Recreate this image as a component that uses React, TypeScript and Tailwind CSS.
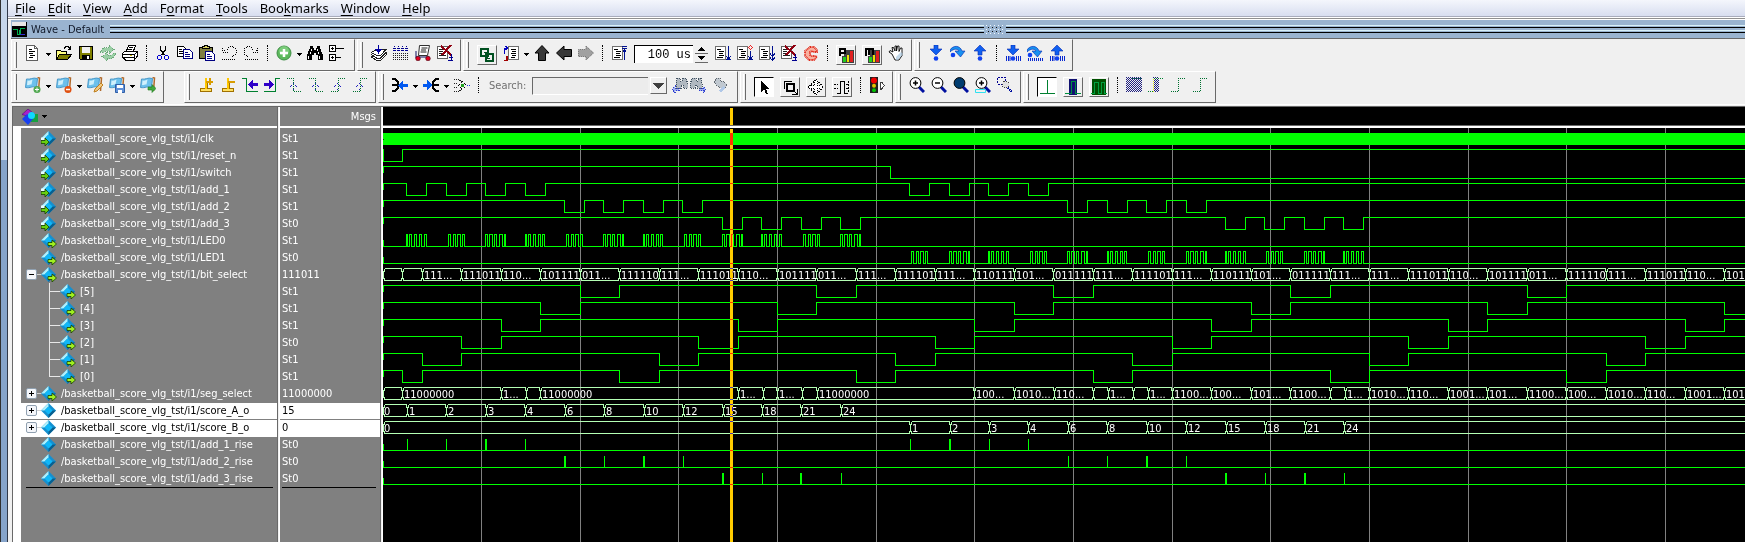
import { Fragment, type ReactNode } from 'react'
import clsx from 'clsx'

const menus = [
  ['', 'F', 'ile'],
  ['', 'E', 'dit'],
  ['', 'V', 'iew'],
  ['', 'A', 'dd'],
  ['F', 'o', 'rmat'],
  ['', 'T', 'ools'],
  ['Boo', 'k', 'marks'],
  ['', 'W', 'indow'],
  ['', 'H', 'elp'],
]

type Kind = 'in' | 'out' | 'net'

interface Signal {
  name: string
  value: string
  kind: Kind
  child?: boolean
  expand?: 'open' | 'closed'
  selected?: boolean
}

const TOP = '/basketball_score_vlg_tst/i1/'

const signals: Signal[] = [
  { name: TOP + 'clk', value: 'St1', kind: 'in' },
  { name: TOP + 'reset_n', value: 'St1', kind: 'in' },
  { name: TOP + 'switch', value: 'St1', kind: 'in' },
  { name: TOP + 'add_1', value: 'St1', kind: 'in' },
  { name: TOP + 'add_2', value: 'St1', kind: 'in' },
  { name: TOP + 'add_3', value: 'St0', kind: 'in' },
  { name: TOP + 'LED0', value: 'St1', kind: 'out' },
  { name: TOP + 'LED1', value: 'St0', kind: 'out' },
  { name: TOP + 'bit_select', value: '111011', kind: 'out', expand: 'open' },
  { name: '[5]', value: 'St1', kind: 'out', child: true },
  { name: '[4]', value: 'St1', kind: 'out', child: true },
  { name: '[3]', value: 'St1', kind: 'out', child: true },
  { name: '[2]', value: 'St0', kind: 'out', child: true },
  { name: '[1]', value: 'St1', kind: 'out', child: true },
  { name: '[0]', value: 'St1', kind: 'out', child: true },
  { name: TOP + 'seg_select', value: '11000000', kind: 'out', expand: 'closed' },
  { name: TOP + 'score_A_o', value: '15', kind: 'net', expand: 'closed', selected: true },
  { name: TOP + 'score_B_o', value: '0', kind: 'net', expand: 'closed', selected: true },
  { name: TOP + 'add_1_rise', value: 'St0', kind: 'net' },
  { name: TOP + 'add_2_rise', value: 'St0', kind: 'net' },
  { name: TOP + 'add_3_rise', value: 'St0', kind: 'net' },
]

/* ---------- waveforms ---------- */

const END = 4000
const STEP = 39.467
const range = (n: number) => Array.from({ length: n }, (_, i) => i)
const at = (start: number, k: number) => Math.floor(start + STEP * k)
const press = (k: number) => at(23.6, k)
const press2 = (k: number) => at(526.75, k)
const score = (k: number) => at(24.3, k)
const score2 = (k: number) => at(527.55, k)
const slot = (k: number) => (k < 0 ? 19 : at(39.3, k))
const top = (row: number) => 4 + row * 17

// pulses: [from, to] pairs where the signal leaves its idle level
function wave(row: number, idle: 0 | 1, pulses: number[][]) {
  const hi = top(row) + 0.5
  const lo = hi + 12
  const a = idle ? hi : lo
  const b = idle ? lo : hi
  let d = `M0 ${a}`
  pulses.forEach(([from, to]) => {
    d += `H${from + 0.5}V${b}H${to + 0.5}V${a}`
  })
  return d + `H${END}`
}

const presses = (first: number) =>
  [press, press2].flatMap((p) => range(4).map((k) => [p(first + k), p(first + k) + 20]))

const bursts: Record<string, number[][]> = {
  A: [[0, 1], [3, 5], [8, 10], [13, 15], [18, 20]],
  B: [[2, 4], [7, 9], [11, 14], [16, 18]],
  C: [[0, 2], [4, 7], [9, 11], [14, 17], [19, 20]],
  D: [[0, 1], [3, 5], [8, 10], [13, 15], [17, 19]],
}

const led = (order: string, p: (k: number) => number) =>
  order.split('').flatMap((c, k) => bursts[c].map(([f, t]) => [p(k) + f, p(k) + t]))

const bit = (n: number) => range(8).map((k) => [slot(n - 1 + 6 * k), slot(n + 6 * k)])

const lines = [
  wave(1, 1, [[0, 19]]),
  wave(2, 1, [[507, END]]),
  wave(3, 1, presses(0)),
  wave(4, 1, presses(4)),
  wave(5, 1, presses(8)),
  wave(6, 0, led('ABCDBCDBCABC', press)),
  wave(7, 0, led('BCABCDBCABCA', press2)),
  ...[5, 4, 3, 2, 1, 0].map((n) => wave(14 - n, 1, bit(n))),
  wave(18, 0, []),
  wave(19, 0, []),
  wave(20, 0, []),
]

const bitLabels =
  '111... 111011 110... 101111 011... 111110 111... 111011 110... 101111 011... 111... 111101 111... 110111 101... 011111 111... 111101 111... 110111 101... 011111 111... 111... 111011 110... 101111 011... 111110 111... 111011 110... 101'.split(' ')

const points = ['1', '2', '3', '4', '6', '8', '10', '12', '15', '18', '21', '24']

const segTail = '1010... 110... 1001... 101... 1100... 100... 1010... 110... 1001... 101'.split(' ')

const buses: { row: number; cells: [number, string][] }[] = [
  {
    row: 8,
    cells: [[0, ''], [19, ''], ...bitLabels.map((t, k): [number, string] => [slot(k), t])],
  },
  {
    row: 15,
    cells: [
      [0, ''], [19, '11000000'], [118, '1...'], [143, ''], [157, '11000000'], [355, '1...'],
      [380, ''], [394, '1...'], [419, ''], [434, '11000000'], [591, '100...'], [631, '1010...'],
      [671, '110...'], [710, ''], [725, '1...'], [750, ''], [765, '1...'], [789, '1100...'],
      [828, '100...'], [868, '101...'], [907, '1100...'], [947, ''], [962, '1...'],
      ...segTail.map((t, k): [number, string] => [slot(24 + k), t]),
    ],
  },
  { row: 16, cells: [[0, '0'], ...points.map((t, k): [number, string] => [score(k), t])] },
  { row: 17, cells: [[0, '0'], ...points.map((t, k): [number, string] => [score2(k), t])] },
]

function busPath(row: number, xs: number[]) {
  const hi = top(row) + 0.5
  const lo = hi + 12
  let d = ''
  xs.forEach((x, i) => {
    const from = x + 1.5
    const to = (i + 1 < xs.length ? xs[i + 1] : END) - 0.5
    d += `M${from} ${hi}H${to}M${from} ${lo}H${to}`
    if (i > 0) d += `M${x - 0.5} ${hi}v3M${x - 0.5} ${lo}v-3M${x + 0.5} ${hi + 2}V${lo - 2}`
    else d += `M0.5 ${hi + 2}V${lo - 2}`
    d += `M${from} ${hi}v3M${from} ${lo}v-3`
  })
  return d
}

const wide1 = [2, 4, 6, 8, 10]
const wide2 = [1, 6, 8, 10]

function Waves() {
  return (
    <svg className="block min-h-[370px] w-full flex-1 bg-black" shapeRendering="crispEdges" aria-label="Waveforms">
      {range(30).map((k) => {
        const x = Math.floor(98.67 * (k + 1) - 0.3) + 0.5
        return <line key={k} x1={x} x2={x} y1="0" y2="100%" stroke="#808080" />
      })}
      <rect x="0" y="5" width={END} height="12" fill="#00ff00" />
      <rect x="0" y="11" width="1" height="1" fill="#004000" />
      {lines.map((d) => (
        <path key={d} d={d} fill="none" stroke="#00ff00" />
      ))}
      {[2, 3, 4, 5, 9, 10, 11, 12, 13, 14].map((row) => (
        <rect key={row} x="0" y={top(row)} width="1" height="7" fill="#00ff00" />
      ))}
      {[1, 6, 7, 18, 19, 20].map((row) => (
        <rect key={row} x="0" y={top(row) + 6} width="1" height="6" fill="#00ff00" />
      ))}
      {range(12).map((k) => {
        const y = top(18 + Math.floor(k / 4)) + 1
        const w1 = wide1.includes(k) ? 1 : 0
        const w2 = wide2.includes(k) ? 1 : 0
        return (
          <Fragment key={k}>
            <rect x={score(k) - w1} y={y} width={1 + w1} height="12" fill="#00ff00" />
            <rect x={score2(k) - w2} y={y} width={1 + w2} height="12" fill="#00ff00" />
          </Fragment>
        )
      })}
      {buses.map(({ row, cells }) => (
        <g key={row}>
          <path d={busPath(row, cells.map((c) => c[0]))} fill="none" stroke="#b4ffb4" />
          {cells.map(([x, label]) => (
            <text key={x} x={x + (label === '0' ? 1 : 2)} y={top(row) + 11} fill="#fff" className="text-[11px]">
              {label}
            </text>
          ))}
        </g>
      ))}
      <rect x="347" y="1" width="3" height="100%" fill="#ffcc00" className="mix-blend-difference" />
    </svg>
  )
}

/* ---------- icons ---------- */

function Svg({ children, w = 16, h = 16, smooth }: { children: ReactNode; w?: number; h?: number; smooth?: boolean }) {
  return (
    <svg width={w} height={h} viewBox={`0 0 ${w} ${h}`} fill="none" shapeRendering={smooth ? 'auto' : 'crispEdges'} className="shrink-0">
      {children}
    </svg>
  )
}

const Sheet = () => (
  <>
    <path d="M1.5 1.5h10v13h-10z" fill="#fff" stroke="#707070" />
    <path d="M3 4.5h4M5 6.5h5M5 8.5h4M5 10.5h5M3 12.5h6" stroke="#000" />
  </>
)

const NewDoc = () => (
  <Svg>
    <path d="M1.5 .5h8l3 3v12h-11z" fill="#fff" stroke="#606060" />
    <path d="M9.5 .5v3h3" stroke="#606060" />
    <path d="M4 4.5h3M4 6.5h6M4 8.5h4M5 10.5h5M4 12.5h4" stroke="#000" />
  </Svg>
)

const Open = () => (
  <Svg>
    <path d="M.5 14.5v-9h4l1 1h5v3" fill="#ffff80" stroke="#000" />
    <path d="M.5 14.5l3-5h12l-4 5z" fill="#808000" stroke="#000" />
    <path d="M8 3.5l2-2h2l2 2M14.5 1v3h-3" stroke="#000" />
  </Svg>
)

const Save = () => (
  <Svg>
    <path d="M1.5 1.5h13v13h-12l-1-1z" fill="#808000" stroke="#000" />
    <path d="M4 2h8v6H4z" fill="#f0f0f0" />
    <path d="M4 10h8v5H4z" fill="#000" />
    <path d="M9 11h2v3H9z" fill="#fff" />
  </Svg>
)

const Reload = () => (
  <Svg>
    <path d="M0 7l4-4.500h5V0l5 4.500-5 4V6H5L3 8zM16 9l-4 4.500H7V16l-5-4.500 5-4V10h4l2-2z" fill="#9ccfa6" stroke="#6aa878" strokeDasharray="1 1" />
  </Svg>
)

const Print = () => (
  <Svg>
    <path d="M4.500 6l2-5.500h7l-2 5.500" fill="#fff" stroke="#000" />
    <path d="M7 2.500h4M6 4.500h4" stroke="#000" />
    <path d="M.5 8.500l3-2.500h11l1 1v4l-3 4h-9l-3-3z" fill="#fff" stroke="#000" />
    <path d="M1 9.500h11l3-2M2 12.500h10M12.500 9v5" stroke="#000" />
    <path d="M8 10.500h2" stroke="#c8b400" />
  </Svg>
)

const Cut = () => (
  <Svg>
    <path d="M5.500 1v4l4 5M10.500 1v4l-4 5" stroke="#000" strokeWidth="1.300" />
    <circle cx="4.500" cy="12.500" r="2" stroke="#0000d0" />
    <circle cx="11.500" cy="12.500" r="2" stroke="#0000d0" />
  </Svg>
)

const Copy = () => (
  <Svg>
    <path d="M.5 1.500h6l2 2v8h-8z" fill="#fff" stroke="#000" />
    <path d="M2 4.500h3M2 6.500h4M2 8.500h4" stroke="#000" />
    <path d="M6.500 4.500h6l3 3v6h-9z" fill="#fff" stroke="#000080" />
    <path d="M8 7.500h3M8 9.500h5M8 11.500h5" stroke="#000080" />
  </Svg>
)

const Paste = () => (
  <Svg>
    <path d="M.5 2.500h13v11H.5z" fill="#808040" stroke="#000" />
    <path d="M3.500 3.500v-2h2v-1h3v1h2v2z" fill="#d8d060" stroke="#000" />
    <path d="M6.500 6.500h6l3 3v6h-9z" fill="#fff" stroke="#000080" />
    <path d="M8 9.500h3M8 11.500h5M8 13.500h5" stroke="#000080" />
  </Svg>
)

const Undo = ({ flip }: { flip?: boolean }) => (
  <Svg>
    <g transform={flip ? 'matrix(-1 0 0 1 16 0)' : undefined} stroke="#000" strokeDasharray="1 1">
      <path d="M1.500 3v4h5M2.500 5.500h2" />
      <path d="M6 4.500l3-3h3l3 3v4l-3 3h-1" />
      <path d="M1 14.500h14" />
    </g>
  </Svg>
)

const Plus = () => (
  <Svg smooth>
    <circle cx="8" cy="8" r="7" fill="#5cb85c" stroke="#3f8f45" />
    <circle cx="8" cy="6" r="5" fill="#8ed88e" opacity=".6" />
    <path d="M8 4v8M4 8h8" stroke="#fff" strokeWidth="2.500" />
  </Svg>
)

const Binoculars = () => (
  <Svg>
    <path d="M3 1h3v2h1v2h2V3h1V1h3v2l3 7v5h-5v-5H9V8H7v2H5v5H0v-5l3-7z" fill="#000" />
    <path d="M4.500 4v2M3.500 7v2M1.500 11v3M10.500 4v2M11.500 7v2M12.500 11v3" stroke="#fff" />
  </Svg>
)

const Tree = () => (
  <Svg>
    <path d="M.5 .5h6v6h-6zM.5 9.500h6v6h-6z" fill="#fff" stroke="#000" />
    <path d="M2 3.500h3M3.500 2v3M2 12.500h3M3.500 11v3M7 3.500h8M7 12.500h5" stroke="#000" />
  </Svg>
)

const Compile = ({ all }: { all?: boolean }) => (
  <Svg>
    {all ? (
      <>
        {[1, 3, 5, 7].map((y) => (
          <path key={y} d={`M0 ${y + 7.5}h16`} stroke="#202020" strokeDasharray="1 1" />
        ))}
        <path d="M1.500 1v5M5.500 1v5M9.500 1v5M13.500 1v5M0 5.500h15M0 3.500h15" stroke="#000090" strokeDasharray="1 1" />
      </>
    ) : (
      <>
        <path d="M.5 12l5 3.500h4l6-6v-2l-9 1z" fill="#fff" stroke="#202020" />
        <path d="M.5 9.500l5 3.500h4l6-6" fill="#fff" stroke="#202020" />
        <path d="M.5 7.500l6-3.500h9l-6 6.500h-4z" fill="#fff" stroke="#202020" />
        <path d="M7.500 0v6M5 4.500l2.500 3 2.500-3z" stroke="#0000a0" fill="#0000a0" strokeWidth="1.500" />
      </>
    )}
  </Svg>
)

const Simulate = () => (
  <Svg smooth>
    <path d="M4.500 .5h10l-2 10h-9z" fill="#fff" stroke="#303030" />
    <path d="M6.500 3h6M6 5h5M5.500 7h6" stroke="#202020" />
    <path d="M1 6v7M1 12h13" stroke="#101060" />
    <circle cx="3" cy="13.500" r="2.300" fill="#e00020" stroke="#400010" strokeWidth=".6" />
    <circle cx="13" cy="13.500" r="2.300" fill="#e00020" stroke="#400010" strokeWidth=".6" />
  </Svg>
)

const BreakSheet = () => (
  <Svg>
    <path d="M.5 1.500h10v12H.5z" fill="#fff" stroke="#606060" />
    <path d="M2 4.500h7M2 6.500h4M2 8.500h6M2 10.500h7" stroke="#202020" />
    <path d="M4 1l10 9M14 0L5 10" stroke="#900010" strokeWidth="2" />
    <path d="M14.500 9v7M12 12.500h4M11 15.500h5" stroke="#000090" />
  </Svg>
)

const Flag = ({ children }: { children: ReactNode }) => (
  <Svg smooth>
    <path d="M12.500 .5l2 .5-1 13" stroke="#b06a2c" strokeWidth="1.500" />
    <path d="M1.500 2c4 1 6-2 11-.5l-1 9c-4-2-6 1-11 0z" fill="#6cc0ec" stroke="#4a98c8" />
    <path d="M2.500 3.500c2 .5 4-.5 5-1l-1 5c-2 0-3 1-4.500.5z" fill="#d0f0fc" />
    {children}
  </Svg>
)

const Wire = ({ minus }: { minus?: boolean }) => (
  <Svg>
    <path d="M2 11.500h11v3H2z" fill="#ffe060" stroke="#a07000" />
    <path d="M7 1h2v11H7z" fill="#ffc800" />
    <path d="M9.500 6v5" stroke="#a07000" />
    <path d={minus ? 'M8 4.500h7' : 'M8 4.500h7M11.500 1v7'} stroke="#d89c00" strokeWidth="2" />
  </Svg>
)

const Edge = ({ left }: { left?: boolean }) => (
  <Svg>
    {left ? (
      <path d="M0 1.500h4.500v13H16" stroke="#008030" />
    ) : (
      <path d="M0 14.500h11.500v-13H16" stroke="#008030" />
    )}
    {left ? (
      <path d="M6 7.500l5-4.500v3h5v3h-5v3z" fill="#3000c8" />
    ) : (
      <path d="M10 7.500L5 3v3H0v3h5v3z" fill="#3000c8" />
    )}
  </Svg>
)

const DimEdge = ({ fall, blue = true }: { fall?: boolean; blue?: boolean }) => (
  <Svg>
    <path d={fall ? 'M1 1.500h6.500v13H15' : 'M1 14.500h7.500v-13H15'} stroke="#007030" strokeDasharray="1 1" />
    {blue && <path d="M7.500 6.500l3 3-3 3-3-3z" stroke="#2020c0" strokeDasharray="1 1" />}
  </Svg>
)

const Merge = ({ flip, dim }: { flip?: boolean; dim?: boolean }) => (
  <Svg>
    {dim ? (
      <>
        <path d="M0 2.500h5l3 3M0 14.500h5l3-3M0 6.500h4M0 10.500h4" stroke="#202020" strokeDasharray="1 1" />
        <path d="M8.500 4.500l4 4-4 4-4-4z" stroke="#000" strokeDasharray="1 1" />
        <path d="M7 8.500h3" stroke="#20a020" strokeWidth="3" />
        <path d="M13 8.500h3" stroke="#2030e0" strokeDasharray="1 1" />
      </>
    ) : flip ? (
      <>
        <path d="M16 2h-3l-3 3v6l3 3h3M10 8h6" stroke="#000" strokeWidth="2" />
        <path d="M9 8L4 3v4H0v3h4v3z" fill="#0058f0" />
      </>
    ) : (
      <>
        <path d="M0 2h3l3 3v6l-3 3H0M0 8h6" stroke="#000" strokeWidth="2" />
        <path d="M6 8l5-5v4h5v3h-5v4z" fill="#0058f0" />
      </>
    )}
  </Svg>
)

const Link = () => (
  <Svg>
    <path d="M2 2h7v7H2zM7 7h7v7H7z" stroke="#005020" strokeWidth="2" />
    <path d="M5 5h3v3M11 11H8V8" stroke="#005020" strokeWidth="1" />
  </Svg>
)

const Restart = () => (
  <Svg>
    <path d="M5.500 1.500h10v13h-10z" fill="#fff" stroke="#707070" />
    <path d="M8 4.500h5M9 6.500h4M8 8.500h5M9 10.500h4M8 12.500h4" stroke="#000" />
    <path d="M1.500 9V3h2M2.500 1l2 2-2 2" stroke="#0000c0" />
    <path d="M.5 15.500h3v-5" stroke="#a00000" strokeWidth="2" />
  </Svg>
)

const Arrow = ({ rotate = 0, dim }: { rotate?: number; dim?: boolean }) => (
  <Svg smooth>
    <path
      transform={`rotate(${rotate} 8 8)`}
      d="M8 .5l7 7.500h-3.500V15.500h-7V8H1z"
      fill={dim ? '#a0a0a0' : '#383838'}
      stroke={dim ? '#606060' : '#000'}
      strokeDasharray={dim ? '1 1' : undefined}
    />
  </Svg>
)

const Run = ({ kind }: { kind: 'back' | 'run' | 'cont' | 'all' }) => (
  <Svg>
    <g transform={kind === 'back' ? undefined : 'translate(-1 0)'}>
      <Sheet />
    </g>
    {kind === 'back' && <path d="M13.500 3v12M11 3.500h5M11 1.500h5M12 6.500l1.500-2 1.500 2" stroke="#001090" />}
    {kind === 'run' && <path d="M13.500 1v13M11.500 11.500l2 3 2-3M11 14.500h5" stroke="#001090" />}
    {kind === 'cont' && (
      <>
        <path d="M13.500 6v8M11.500 11.500l2 3 2-3M11 14.500h5" stroke="#001090" />
        <path d="M13.500 .5l2 2-2 2-2-2z" stroke="#f02020" />
      </>
    )}
    {kind === 'all' && <path d="M13.500 1v14M11 8.500l2.500 3 2.500-3M11 12.500l2.500 3 2.500-3" stroke="#001090" />}
  </Svg>
)

const Stop = () => (
  <Svg smooth>
    <path d="M7 2h4l3 3v2h-4L9 6 7 7v3l2 1h4l1 1-3 3H6l-4-4V6z" fill="#f8b0a0" stroke="#e02818" strokeDasharray="1 .6" strokeWidth="1.800" />
  </Svg>
)

const Profile = ({ memory }: { memory?: boolean }) => (
  <Svg>
    <path d="M6 3h10v13H4V9h2z" fill="#404040" />
    <path d="M5 10h3v5H5z" fill="#20d020" />
    <path d="M9 8h2v7H9z" fill="#f0e000" />
    <path d="M12 4h3v11h-3z" fill="#e02020" />
    <path d={memory ? 'M2 9V2h3v6M5 2h4v6' : 'M2 9V2h5v4H2'} stroke="#000" strokeWidth="2" />
  </Svg>
)

const Hand = () => (
  <Svg smooth>
    <path d="M4 9L1 7l1-1.500L5 7 4 2.500h1.500L7 6V1h1.500v5l1-5H11v5.500L12.500 3H14v7.500l-3 4.500H7z" fill="#fff" stroke="#000" strokeWidth=".9" />
    <path d="M8 12l5-5 2 2-5 6H8z" fill="#a8c8e0" opacity=".7" />
  </Svg>
)

const StepArrow = ({ kind, bars }: { kind: 'in' | 'over' | 'out'; bars?: boolean }) => (
  <Svg smooth>
    {kind === 'in' && <path d="M6 0h4v4h4L8 10 2 4h4z" fill="#1060f0" stroke="#0828b0" strokeWidth=".6" />}
    {kind === 'out' && <path d="M6 10h4V6h4L8 0 2 6h4z" fill="#1060f0" stroke="#0828b0" strokeWidth=".6" />}
    {kind === 'over' && <path d="M0 5c3-5 10-5 12 1h3l-4.500 6L5 6h4C8 4 4 3 0 7z" fill="#1890f0" stroke="#0828b0" strokeWidth=".6" />}
    <circle cx={kind === 'over' ? 3 : 8} cy={kind === 'over' ? 10 : 13.5} r="2.300" fill="#1040f0" />
    {bars && <path d={kind === 'over' ? 'M1.500 13v3M3.500 13v3M5.500 13v3M7.500 13v3M9.500 13v3M11.500 13v3M13.500 13v3M15.500 13v3' : 'M1.500 11v5M3.500 11v5M5 11v5M11.500 11v5M13.500 11v5M15.500 11v5'} stroke="#0828d0" />}
  </Svg>
)

const FindDim = ({ flip }: { flip?: boolean }) => (
  <Svg>
    <g transform={flip ? 'matrix(-1 0 0 1 16 0)' : undefined}>
      <path d="M5 1h3v3h2V1h4l2 7v3h-5V8H9v3H4V7z" fill="#b0b8c0" stroke="#405060" strokeDasharray="1 1" />
      <path d="M0 12.500l3-3v2h4v2H3v2z" fill="#a0b0f0" stroke="#3040d0" strokeDasharray="1 1" />
    </g>
  </Svg>
)

const FindHand = () => (
  <Svg>
    <path d="M2 5l3-4h3v3h3l4 4-2 3H9L5 9z" fill="#c0c8d0" stroke="#606870" strokeDasharray="1 1" />
    <path d="M6 14l5-5 2 2-4 4z" fill="#b0c8e8" />
  </Svg>
)

const Pointer = () => (
  <Svg>
    <path d="M5 2v11l3-3 2 5h2l-2-5h4z" fill="#000" />
  </Svg>
)

const ZoomBox = () => (
  <Svg>
    <path d="M2.500 10V2.500H10" stroke="#000" />
    <path d="M5 5h7v7H5z" stroke="#000" strokeWidth="2" />
    <path d="M10 15.500h5.500V10M12 12l3 3" stroke="#000" />
  </Svg>
)

const Pan = () => (
  <Svg>
    <path d="M8 .5l3 3H9.500v3h3V5l3 3-3 3V9.500h-3v3H11l-3 3-3-3h1.500v-3h-3V11l-3-3 3-3v1.500h3v-3H5z" fill="#fff" stroke="#000" strokeDasharray="1 1" />
  </Svg>
)

const EditWave = () => (
  <Svg>
    <path d="M6.500 14V2.500h4V14M3 14.500h4M10 14.500h4" stroke="#000" />
    <path d="M0 5.500h4M0 9.500h4M12 5.500h2M12 9.500h2M14.500 2v12" stroke="#000" strokeDasharray="2 1" />
  </Svg>
)

const Traffic = () => (
  <Svg>
    <path d="M1 0h8v16H1z" fill="#202020" />
    <g shapeRendering="auto">
      <circle cx="5" cy="3.500" r="3" fill="#f00000" />
      <circle cx="5" cy="8.800" r="2" fill="#e0c000" />
      <circle cx="5" cy="13.300" r="2" fill="#00c000" />
    </g>
    <path d="M11.500 5v7h1l3-3.500-3-3.500z" fill="#fff" stroke="#404040" />
  </Svg>
)

const Lens = ({ mode }: { mode: 'in' | 'out' | 'full' | 'cursor' }) => (
  <Svg smooth>
    <path d="M10 10l5 5" stroke="#0010a0" strokeWidth="3" />
    <circle cx="6.500" cy="6" r="5.400" fill={mode === 'full' ? '#003c70' : '#fff'} stroke="#000" />
    {mode !== 'full' && <path d={mode === 'out' ? 'M4 6h5' : 'M4 6h5M6.500 3.500v5'} stroke="#000" strokeWidth="1.500" />}
    {mode === 'cursor' && <path d="M.5 12.500h10v3H.5z" stroke="#30e0f0" />}
  </Svg>
)

const LensArea = () => (
  <Svg>
    <path d="M.5 .5h8v3M.5 1v6h4" stroke="#000090" strokeDasharray="2 1" />
    <path d="M7 4l4 1 2 4-3 2-4-1-1-4z" fill="#e0e0e0" stroke="#404040" strokeDasharray="1 1" />
    <path d="M11 11l4 4" stroke="#0010a0" strokeDasharray="1 1" strokeWidth="2" />
  </Svg>
)

const WaveMode = ({ kind }: { kind: 'line' | 'blue' | 'green' }) => (
  <Svg>
    {kind === 'blue' && <path d="M4 0h8v16H4z" fill="#101070" />}
    {kind === 'green' && <path d="M1 0h14v16H1z" fill="#005000" />}
    {kind === 'line' && <path d="M8.500 1v14M1 14.500h15" stroke="#008030" />}
    {kind === 'blue' && <path d="M0 14.500h6V2.500h4v12h6" stroke="#009040" />}
    {kind === 'green' && <path d="M0 14.500h3v-11h4v11h3v-11h3v11h3" stroke="#00a040" />}
  </Svg>
)

const Hatch = ({ narrow }: { narrow?: boolean }) => (
  <Svg>
    {range(15).map((y) => (
      <path key={y} d={narrow ? `M${5 + (y % 2)} ${y + 0.5}h5` : `M${y % 2} ${y + 0.5}h16`} stroke="#202080" strokeDasharray="1 1" />
    ))}
    <path d={narrow ? 'M0 14.500h5M6 1.500h9' : 'M6 1.500h9'} stroke="#008030" strokeDasharray="1 1" />
    {narrow && <path d="M5.500 2v13" stroke="#e0e020" strokeDasharray="1 1" />}
  </Svg>
)

const Diamond = ({ kind }: { kind: Kind }) => (
  <Svg w={16} h={15} smooth>
    <path d="M7.500 0L15 7.500 7.500 15 0 7.500z" fill="#1490d0" />
    <path d="M7.500 0L0 7.500h3.500l4-4z" fill="#b0f0fc" />
    <path d="M15 7.500L7.500 15v-3.500l4-4z" fill="#086090" />
    <path d="M7.500 3.500l4 4-4 4-4-4z" fill="#10b8f8" />
    {kind === 'in' && (
      <>
        <path d="M0 6.500h4v2.500H0z" fill="#e8ffff" />
        <path d="M0 9.500h4V7l4 4-4 4v-2.500H0z" fill="#68d010" stroke="#184000" strokeWidth=".8" />
      </>
    )}
    {kind === 'out' && <path d="M7 9.500h4V7l4.500 4-4.500 4v-2.500H7z" fill="#a0f020" stroke="#184000" strokeWidth=".8" />}
  </Svg>
)

/* ---------- toolbar pieces ---------- */

function Tool({ label, children, narrow }: { label: string; children: ReactNode; narrow?: boolean }) {
  return (
    <button type="button" aria-label={label} className={clsx('flex h-4 justify-center', narrow ? 'w-[18px]' : 'w-[22px]')}>
      {children}
    </button>
  )
}

function Raised({ label, children, pressed }: { label: string; children: ReactNode; pressed?: boolean }) {
  return (
    <button
      type="button"
      aria-label={label}
      aria-pressed={pressed}
      className={clsx(
        'mx-[3px] flex size-5 items-center justify-center border',
        pressed ? 'border-t-black border-l-black border-r-white border-b-white bg-white' : 'border-t-white border-l-white border-r-[#696969] border-b-[#696969]',
      )}
    >
      {children}
    </button>
  )
}

const Caret = () => (
  <button type="button" aria-label="More" className="flex h-4 w-[9px] items-center justify-center pt-0.5">
    <svg width="5" height="3" shapeRendering="crispEdges">
      <path d="M0 0h5L2.500 3z" fill="#000" />
    </svg>
  </button>
)

const Sep = () => (
  <div className="flex w-[11px] justify-center">
    <div className="h-4 border-l border-dotted border-black" />
  </div>
)

function Box({ children, roomy, gapAfter }: { children: ReactNode; roomy?: boolean; gapAfter?: boolean }) {
  return (
    <div
      className={clsx(
        'relative flex h-8 shrink-0 items-start border border-t-white border-l-white border-r-[#696969] border-b-[#696969] pt-[5px] pl-2.5',
        roomy ? 'pr-1.5' : 'pr-1',
        gapAfter && 'mr-[18px]',
      )}
    >
      <div className="absolute top-0.5 left-[2px] h-[26px] w-[3px] border-r border-l border-r-[#696969] border-l-white" />
      {children}
    </div>
  )
}

/* ---------- signal list ---------- */

const Divider = () => <td className="w-[3px] border-r border-l border-r-white border-l-[#696969] bg-[#f0f0f0] p-0" />

function SignalName({ s, last }: { s: Signal; last: boolean }) {
  return (
    <div className="flex h-[15px] items-center">
      {s.child ? (
        <svg width="39" height="17" shapeRendering="crispEdges" className="shrink-0">
          <path d={last ? 'M28.500 0V8.500H39' : 'M28.500 0V17M28.500 8.500H39'} fill="none" stroke="#e8e8e8" />
        </svg>
      ) : s.expand ? (
        <span className="flex w-5 items-center pl-[5px]">
          <button type="button" aria-label={s.expand === 'open' ? 'Collapse' : 'Expand'} className="size-[11px] shrink-0 rounded-xs border border-[#90a0b0] bg-[#f4f6fa]">
            <svg width="9" height="9" shapeRendering="crispEdges">
              <path d={s.expand === 'open' ? 'M2 4.500h5' : 'M2 4.500h5M4.500 2v5'} stroke="#000" />
            </svg>
          </button>
          <span className="h-px flex-1 bg-[#d0d0d0]" />
        </span>
      ) : (
        <span className="w-5" />
      )}
      <Diamond kind={s.kind} />
      <span className="pl-1">{s.name}</span>
    </div>
  )
}

function SignalTable() {
  return (
    <div className="flex w-[371px] shrink-0 flex-col border-l border-[#696969]">
      <table className="w-full table-fixed border-separate border-spacing-0 bg-[#808080] text-left text-white">
        <thead>
          <tr className="h-[21px]">
            <th className="h-[21px] w-[264px] border-b-2 border-white p-0 pl-[9px]">
              <button type="button" aria-label="Signal filter" className="flex items-center gap-1">
                <Svg smooth>
                  <path d="M6 0l7 5.500-6 2-7-2z" fill="#a820c8" stroke="#500070" strokeWidth=".6" />
                  <path d="M9 5h7v8H9z" fill="#18a040" />
                  <path d="M0 10l5-5 6 5-5 6z" fill="#1840f0" />
                  <circle cx="9.500" cy="6.500" r="3.500" fill="#10d8ff" />
                </Svg>
                <svg width="5" height="3" shapeRendering="crispEdges">
                  <path d="M0 0h5L2.500 3z" fill="#000" />
                </svg>
              </button>
            </th>
            <Divider />
            <th className="w-[100px] border-b-2 border-white p-0 pr-1 text-right font-normal">Msgs</th>
            <Divider />
          </tr>
        </thead>
        <tbody>
          <tr className="h-[3px]">
            <td className="border-l-8 border-white p-0" />
            <Divider />
            <td className="p-0" />
            <Divider />
          </tr>
          {signals.map((s, i) => {
            const split = s.selected && signals[i + 1].selected
            return (
              <tr key={s.name} className="h-[17px]">
                <td className={clsx('h-[17px] border-l-8 border-white p-0', s.selected && 'bg-white text-black')}>
                  <div className={clsx('h-[17px]', split && 'shadow-[inset_0_-1px_0_#808080]')}>
                    <SignalName s={s} last={!signals[i + 1]?.child} />
                  </div>
                </td>
                <Divider />
                <td className={clsx('h-[17px] p-0', s.selected && 'bg-white text-black')}>
                  <div className={clsx('h-[17px] pl-0.5 leading-[15px]', split && 'shadow-[inset_0_-1px_0_#808080]')}>{s.value}</div>
                </td>
                <Divider />
              </tr>
            )
          })}
        </tbody>
      </table>
      <div className="-mt-px flex flex-1 bg-[#808080]">
        <div className="w-[264px] border-l-8 border-white">
          <div className="mr-1 ml-[5px] h-px bg-black" />
        </div>
        <div className="w-[3px] border-r border-l border-r-white border-l-[#696969] bg-[#f0f0f0]" />
        <div className="w-[100px]">
          <div className="mr-1 ml-0.5 h-px bg-black" />
        </div>
        <div className="w-[3px] border-r border-l border-r-white border-l-[#696969] bg-[#f0f0f0]" />
      </div>
    </div>
  )
}

const TitleLines = ({ className }: { className: string }) => (
  <div className={clsx('flex flex-col justify-center gap-0.5', className)}>
    <div className="h-[3px] border-t border-b border-t-[#d8f0f8] border-b-black" />
    <div className="h-[3px] border-t border-b border-t-[#d8f0f8] border-b-black" />
  </div>
)

export default function App() {
  return (
    <div className="flex min-h-screen overflow-hidden bg-[#f0f0f0] font-['DejaVu_Sans_Condensed','Noto_Sans',sans-serif] text-[11px] leading-[17px] text-black">
      <div className="flex w-2 shrink-0 flex-col border-r border-l border-r-[#303848] border-l-[#303030]">
        <div className="h-40 bg-[#c6d6ea]" />
        <div className="flex-1 bg-[#86a4ca]" />
      </div>
      <div className="flex min-w-0 flex-1 flex-col">
        <nav className="flex h-[17px] items-center gap-3 border-b border-[#a8acbc] bg-linear-to-b from-[#f4f6fc] to-[#d8def0] pl-[7px] font-['Noto_Sans',sans-serif] text-[13px] leading-4">
          {menus.map(([a, key, b]) => (
            <button key={a + key + b} type="button">
              {a}
              <span className="underline underline-offset-2">{key}</span>
              {b}
            </button>
          ))}
        </nav>
        <div className="h-[3px] border-t border-b border-t-white border-b-white bg-[#909090]" />

        <div className="ml-[3px] flex h-[19px] items-stretch border-b border-[#696969] bg-[#9ab4d0]">
          <div className="flex items-center gap-1 pr-1.5 pl-px text-[#101828]">
            <Svg w={15} h={15}>
              <path d="M0 0h15v15H0z" fill="#000" />
              <path d="M0 0h14v4H0z" fill="#e8e8e8" />
              <path d="M1 7.500h4v5h2v-5M8 12.500V6.500h5" stroke="#00b050" />
              <path d="M8 12.500h5" stroke="#3030d0" />
            </Svg>
            <span>Wave - Default</span>
          </div>
          <TitleLines className="flex-[874]" />
          <svg width="22" height="18" shapeRendering="crispEdges">
            {range(5).map((y) => (
              <path key={y} d={`M${y % 2 ? 4 : 2} ${y * 2 + 5.5}H20`} stroke={y % 2 ? '#101010' : '#f0f8ff'} strokeDasharray="1 3" />
            ))}
          </svg>
          <TitleLines className="flex-[739]" />
        </div>

        <div className="ml-[3px] flex gap-0.5">
          <Box roomy>
            <Tool label="New"><NewDoc /></Tool>
            <Caret />
            <Tool label="Open"><Open /></Tool>
            <Tool label="Save"><Save /></Tool>
            <Tool label="Reload"><Reload /></Tool>
            <Tool label="Print"><Print /></Tool>
            <Sep />
            <Tool label="Cut"><Cut /></Tool>
            <Tool label="Copy"><Copy /></Tool>
            <Tool label="Paste"><Paste /></Tool>
            <Tool label="Undo"><Undo /></Tool>
            <Tool label="Redo"><Undo flip /></Tool>
            <Sep />
            <Tool label="Add"><Plus /></Tool>
            <Caret />
            <Tool label="Find"><Binoculars /></Tool>
            <Tool label="Collapse all"><Tree /></Tool>
          </Box>
          <Box>
            <Tool label="Compile"><Compile /></Tool>
            <Tool label="Compile all"><Compile all /></Tool>
            <Tool label="Simulate"><Simulate /></Tool>
            <Tool label="Break"><BreakSheet /></Tool>
          </Box>
          <Box>
            <Raised label="Link"><Link /></Raised>
            <Tool label="Restart"><Restart /></Tool>
            <Caret />
            <Tool label="Environment up"><Arrow /></Tool>
            <Tool label="Back"><Arrow rotate={-90} /></Tool>
            <Tool label="Forward"><Arrow rotate={90} dim /></Tool>
            <Sep />
            <Tool label="Restart run"><Run kind="back" /></Tool>
            <input
              aria-label="Run length"
              defaultValue="100 us"
              className="ml-1 h-[18px] w-[59px] border-t border-l border-black bg-white pr-0.5 text-right font-['Liberation_Mono',monospace] text-xs"
            />
            <div className="mr-1 ml-0.5 flex w-[13px] flex-col">
              <button type="button" aria-label="Longer" className="flex h-[9px] items-center justify-center border-b border-[#696969]">
                <svg width="7" height="4" shapeRendering="crispEdges"><path d="M0 4h7L3.500 0z" /></svg>
              </button>
              <button type="button" aria-label="Shorter" className="flex h-[9px] items-center justify-center border-b border-[#696969]">
                <svg width="7" height="4" shapeRendering="crispEdges"><path d="M0 0h7L3.500 4z" /></svg>
              </button>
            </div>
            <Tool label="Run"><Run kind="run" /></Tool>
            <Tool label="Continue run"><Run kind="cont" /></Tool>
            <Tool label="Run all"><Run kind="all" /></Tool>
            <Tool label="Break run"><BreakSheet /></Tool>
            <Tool label="Stop"><Stop /></Tool>
            <Sep />
            <Raised label="Performance profiling"><Profile /></Raised>
            <Raised label="Memory profiling"><Profile memory /></Raised>
            <Tool label="Edit breakpoints"><Hand /></Tool>
          </Box>
          <Box>
            <Tool label="Step into"><StepArrow kind="in" /></Tool>
            <Tool label="Step over"><StepArrow kind="over" /></Tool>
            <Tool label="Step out"><StepArrow kind="out" /></Tool>
            <Sep />
            <Tool label="Step into current"><StepArrow kind="in" bars /></Tool>
            <Tool label="Step over current"><StepArrow kind="over" bars /></Tool>
            <Tool label="Step out current"><StepArrow kind="out" bars /></Tool>
          </Box>
        </div>

        <div className="ml-[3px] flex gap-0.5">
          <Box gapAfter>
            <Tool label="Add bookmark"><Flag><circle cx="12" cy="12.500" r="3.500" fill="#50a850" /><path d="M12 10.500v4M10 12.500h4" stroke="#fff" /></Flag></Tool>
            <Caret />
            <Tool label="Delete bookmark"><Flag><circle cx="12" cy="12.500" r="3.500" fill="#e05010" /><path d="M10 12.500h4" stroke="#fff" strokeWidth="1.500" /></Flag></Tool>
            <Caret />
            <Tool label="Edit bookmark"><Flag><path d="M7 15l1-3 6-6 2 2-6 6z" fill="#f0c880" stroke="#c08020" /></Flag></Tool>
            <Tool label="Save bookmarks"><Flag><path d="M6.500 7.500h9v8h-9z" fill="#6090d8" stroke="#3060a8" /><path d="M8 8h6v3H8zM9 13h4v3H9z" fill="#fff" /></Flag></Tool>
            <Caret />
            <Tool label="Go to bookmark"><Flag><path d="M8 10h4V7.500l4 4-4 4V13H8z" fill="#40a840" stroke="#187818" strokeWidth=".6" /></Flag></Tool>
          </Box>
          <Box>
            <Tool label="Insert cursor"><Wire /></Tool>
            <Tool label="Delete cursor"><Wire minus /></Tool>
            <Tool label="Previous transition"><Edge left /></Tool>
            <Tool label="Next transition"><Edge /></Tool>
            <Tool label="Previous falling edge"><DimEdge fall /></Tool>
            <Tool label="Next falling edge"><DimEdge fall /></Tool>
            <Tool label="Previous rising edge"><DimEdge /></Tool>
            <Tool label="Next rising edge"><DimEdge /></Tool>
          </Box>
          <Box>
            <Tool label="Drivers"><Merge /></Tool>
            <Caret />
            <Tool label="Readers"><Merge flip /></Tool>
            <Caret />
            <Tool label="Trace"><Merge dim /></Tool>
            <Sep />
            <label htmlFor="search" className="mr-[5px] ml-[5px] w-[38px] text-[#707070]">Search:</label>
            <input id="search" className="h-[18px] w-[116px] border-t border-b border-l border-t-[#696969] border-b-white border-l-[#696969] bg-[#ececec] px-1" />
            <button type="button" aria-label="Search history" className="mr-1 ml-0.5 flex size-[17px] items-center justify-center border border-t-white border-l-white border-r-[#696969] border-b-[#696969]">
              <svg width="11" height="6" shapeRendering="crispEdges"><path d="M0 0h11L5.500 6z" fill="#404040" /></svg>
            </button>
            <Tool label="Find previous" narrow><FindDim /></Tool>
            <Tool label="Find next" narrow><FindDim flip /></Tool>
            <div className="px-0.5">
              <Tool label="Search options"><FindHand /></Tool>
            </div>
          </Box>
          <Box>
            <Raised label="Select mode" pressed><Pointer /></Raised>
            <Raised label="Zoom mode"><ZoomBox /></Raised>
            <Raised label="Pan mode"><Pan /></Raised>
            <Raised label="Edit mode"><EditWave /></Raised>
            <Sep />
            <Tool label="Stop drawing"><Traffic /></Tool>
          </Box>
          <Box>
            <Tool label="Zoom in"><Lens mode="in" /></Tool>
            <Tool label="Zoom out"><Lens mode="out" /></Tool>
            <Tool label="Zoom full"><Lens mode="full" /></Tool>
            <Tool label="Zoom in on cursor"><Lens mode="cursor" /></Tool>
            <Tool label="Zoom range"><LensArea /></Tool>
          </Box>
          <Box>
            <Raised label="Expanded time off" pressed><WaveMode kind="line" /></Raised>
            <Raised label="Expanded time deltas"><WaveMode kind="blue" /></Raised>
            <Raised label="Expanded time events"><WaveMode kind="green" /></Raised>
            <Sep />
            <Tool label="Expand all time"><Hatch /></Tool>
            <Tool label="Expand at cursor"><Hatch narrow /></Tool>
            <Tool label="Collapse all time"><DimEdge blue={false} /></Tool>
            <Tool label="Collapse at cursor"><DimEdge blue={false} /></Tool>
          </Box>
        </div>
        <div className="mt-px ml-1 h-[3px] border-t border-b border-t-white border-b-[#696969]" />

        <main className="ml-1 flex flex-1">
          <SignalTable />
          <div className="flex min-w-0 flex-1 flex-col">
            <div className="h-[19px] border-b border-[#696969] bg-black pt-px pl-[347px]">
              <div className="h-[17px] w-[3px] bg-[#ffcc00]" />
            </div>
            <div className="h-0.5 bg-white" />
            <Waves />
          </div>
        </main>
      </div>
    </div>
  )
}
